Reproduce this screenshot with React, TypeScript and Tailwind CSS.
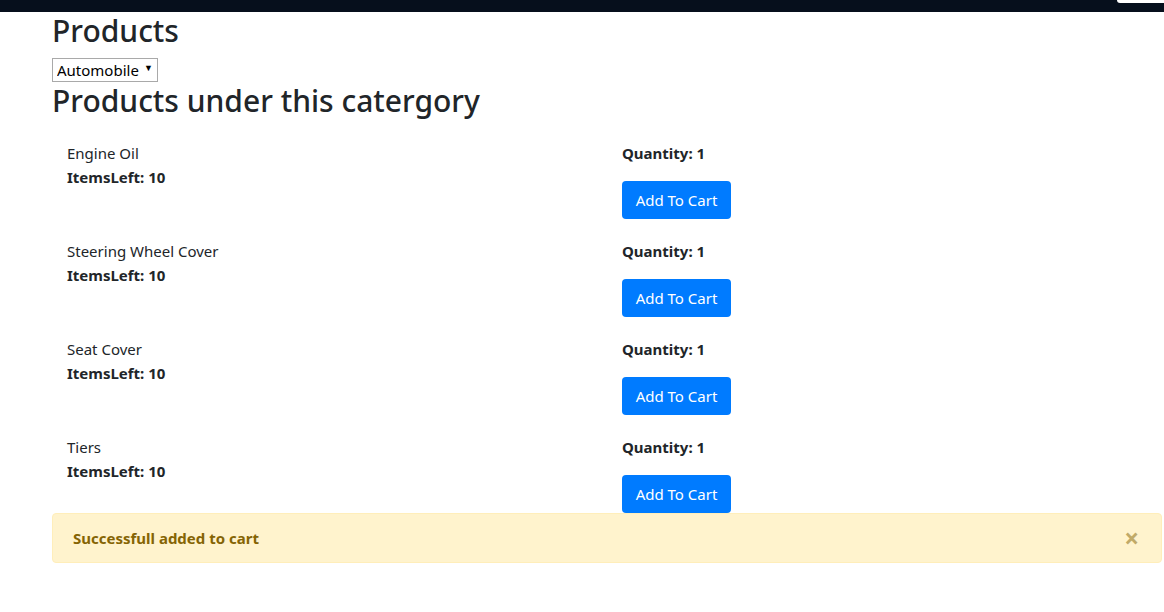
const products = [
  { name: "Engine Oil", left: 10, qty: 1 },
  { name: "Steering Wheel Cover", left: 10, qty: 1 },
  { name: "Seat Cover", left: 10, qty: 1 },
  { name: "Tiers", left: 10, qty: 1 },
]

function ProductRow({ name, left, qty }: { name: string; left: number; qty: number }) {
  return (
    <div className="grid grid-cols-2">
      <div className="px-[15px]">
        <div className="leading-6">{name}</div>
        <div className="font-bold leading-6">ItemsLeft: {left}</div>
      </div>
      <div className="px-[15px]">
        <div className="font-bold leading-6">Quantity: {qty}</div>
        <button className="mt-4 h-[38px] w-[109px] rounded bg-[#007bff] text-center leading-6 text-white">
          Add To Cart
        </button>
      </div>
    </div>
  )
}

export default function App() {
  return (
    <div className="min-h-[612px] bg-white font-['Noto_Sans','Open_Sans',sans-serif] text-[15px] text-[#212529]">
      <div className="flex h-3 justify-end bg-[#060f1c]">
        <div className="h-[3px] w-[47px] rounded-bl-sm bg-white"></div>
      </div>

      <div className="ml-[52px] w-[1110px]">
        <h2 className="mb-2 text-[30px] leading-[38px] font-medium">Products</h2>
        <div className="relative inline-block">
          <select className="h-6 appearance-none rounded-none border border-[#a9a9a9] bg-white pr-[18px] pl-1 text-[15px] leading-5 text-black">
            <option>Automobile</option>
          </select>
          <span className="pointer-events-none absolute top-[3px] right-[5px] text-[9px] text-black">▼</span>
        </div>
        <h2 className="mb-2 text-[30px] leading-[38px] font-medium">Products under this catergory</h2>

        <div className="flex flex-col gap-5 pt-[13px]">
          {products.map((p) => (
            <ProductRow key={p.name} {...p} />
          ))}
        </div>

        <div className="flex items-center justify-between rounded border border-[#ffeeba] bg-[#fff3cd] py-3 pr-[22px] pl-5 text-[#856404]">
          <span className="leading-6 font-bold">Successfull added to cart</span>
          <span className="text-[26px] leading-6 font-bold opacity-50">×</span>
        </div>
      </div>
    </div>
  )
}
